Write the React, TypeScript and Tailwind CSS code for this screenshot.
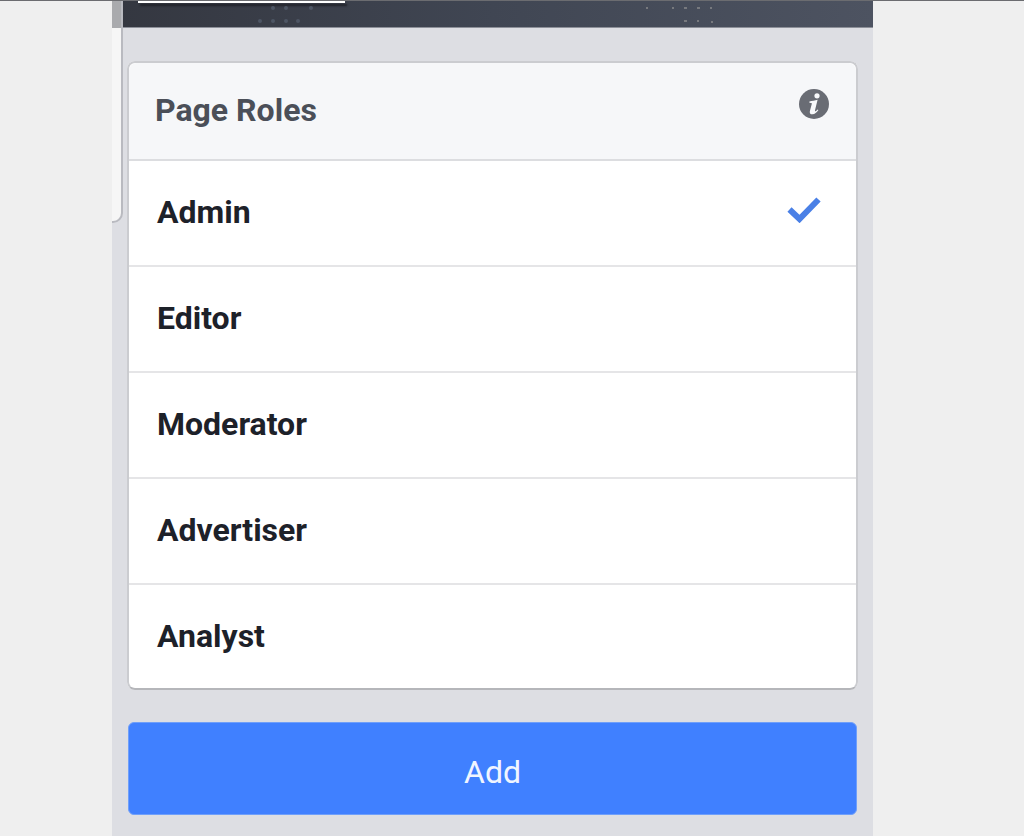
import React, { useState } from 'react';

const ROLES = ['Admin', 'Editor', 'Moderator', 'Advertiser', 'Analyst'];

function InfoIcon() {
  return (
    <svg viewBox="0 0 30 30" className="w-[30px] h-[30px]" aria-hidden="true">
      <circle cx="15" cy="15" r="15" fill="#696c74" />
      <circle cx="18" cy="6.8" r="2.6" fill="#f8f9fb" />
      <path
        d="M10.400 12.400c2.700-.2 5.600-.9 8.200-1.600L16 21.300c-.2 1 .1 1.300.7.9.6-.4 1.200-1 1.800-1.800l.9.700c-1.700 2.700-3.600 4.200-6 4.200-2.200 0-3-1.400-2.500-3.400l1.800-6.700c.2-.9 0-1.200-.7-1.300l-1.600-.2z"
        fill="#f8f9fb"
      />
    </svg>
  );
}

function CheckIcon() {
  return (
    <svg viewBox="0 0 34 26" className="w-[34px] h-[26px] mb-1" fill="none" aria-hidden="true">
      <path d="M2.500 12.500L12.500 22L31.500 2.500" stroke="#4a80e6" strokeWidth="6" />
    </svg>
  );
}

function CoverPhoto() {
  return (
    <header className="relative h-7 border-t border-[#6b6c70] border-b border-b-[#8d9099] bg-linear-to-r from-[#343740] via-[#404653] to-[#4d5361]">
      <div className="ml-[26px] w-[207px] h-[2px] bg-white shadow-[2px_3px_2px_#1f2128]" />
      <svg className="absolute top-0 left-0 w-full h-[26px]" aria-hidden="true">
        <g fill="#4d5564">
          <circle cx="161" cy="7" r="2" />
          <circle cx="174" cy="7" r="2" />
          <circle cx="199" cy="7" r="2" />
          <circle cx="148" cy="20" r="2" />
          <circle cx="161" cy="20" r="2" />
          <circle cx="174" cy="20" r="2" />
          <circle cx="186" cy="20" r="2" />
        </g>
        <g fill="#77797e">
          <rect x="534" y="6" width="2" height="2" />
          <rect x="560" y="6" width="2" height="2" />
          <rect x="572" y="6" width="3" height="2" />
          <rect x="585" y="6" width="3" height="2" />
          <rect x="598" y="6" width="2" height="2" />
          <rect x="572" y="19" width="3" height="2" />
          <rect x="585" y="19" width="2" height="2" />
          <rect x="599" y="20" width="2" height="2" />
        </g>
      </svg>
    </header>
  );
}

export default function App() {
  const [role, setRole] = useState('Admin');

  return (
    <div className="min-h-screen bg-[#efefef] pl-28 pr-[151px] font-[Roboto,sans-serif]">
      <div className="fixed inset-x-0 top-0 z-10 h-px bg-[#6b6c70]" />
      <div className="relative min-h-screen bg-[#dddee3]">
        <CoverPhoto />
        {/* drawer handle that overlaps the left edge */}
        <div className="absolute top-0 left-0 w-[11px] h-[223px] rounded-br-[10px] border-r-2 border-b-2 border-[#b9bac0] bg-[#f6f6f6]">
          <div className="h-7 bg-[#a9aaad]" />
        </div>

        <main className="px-4 pt-[33px] pb-[21px]">
          <form onSubmit={(e) => e.preventDefault()}>
            <fieldset
              aria-labelledby="roles-title"
              className="-mx-px rounded-lg border-2 border-[#cbccd0] border-b-[#b5b6ba] bg-white overflow-hidden"
            >
              <div className="flex items-start justify-between h-[98px] pl-[26px] pr-[27px] pt-[26px] bg-[#f6f7f9] border-b-2 border-[#dcdde0]">
                <h1 id="roles-title" className="text-[32px] leading-[42px] font-bold text-[#4b4f58]">
                  Page Roles
                </h1>
                <button type="button" aria-label="About page roles" className="cursor-pointer">
                  <InfoIcon />
                </button>
              </div>

              <div className="divide-y-2 divide-[#e5e5e7]">
                {ROLES.map((name) => (
                  <label
                    key={name}
                    className="flex items-center justify-between h-[106px] last:h-[103px] pl-7 pr-[35px] pb-[2px] text-[32px] font-bold text-[#1d2129] cursor-pointer has-focus-visible:bg-[#f6f7f9]"
                  >
                    <span>{name}</span>
                    <input
                      type="radio"
                      name="role"
                      value={name}
                      checked={role === name}
                      onChange={() => setRole(name)}
                      className="sr-only"
                    />
                    {role === name && <CheckIcon />}
                  </label>
                ))}
              </div>
            </fieldset>

            <button
              type="submit"
              className="mt-8 w-full h-[93px] pt-[6px] rounded-md border border-[#6f9ffa] bg-[#4080ff] text-[32px] text-[#f0f5ff] cursor-pointer"
            >
              Add
            </button>
          </form>
        </main>
      </div>
    </div>
  );
}
